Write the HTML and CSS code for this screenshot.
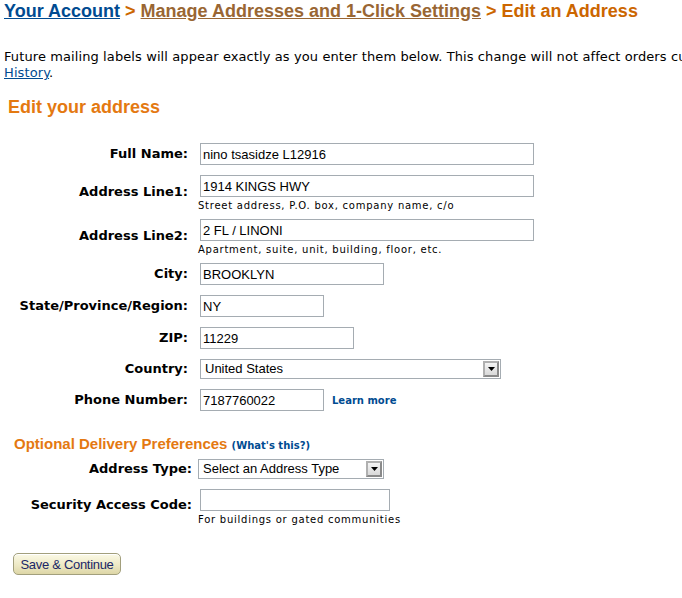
FILE: index.html
```html
<!DOCTYPE html>
<html lang="en">
<head>
<meta charset="utf-8">
<title>Edit an Address</title>
<link rel="stylesheet" href="styles.css">
</head>
<body>
<div class="page">
  <h1 class="crumbs"><a class="crumb-link" href="#">Your Account</a> <span class="sep">&gt;</span> <a class="crumb-visited" href="#">Manage Addresses and 1-Click Settings</a> <span class="sep">&gt;</span> <span class="current">Edit an Address</span></h1>

  <p class="intro">Future mailing labels will appear exactly as you enter them below. This change will not affect orders currently in your Order<br><a href="#">History</a>.</p>

  <h2 class="section-title">Edit your address</h2>

  <div class="form-grid main-grid">
    <label class="lbl">Full Name:</label>
    <div class="field"><input class="txt w-long" type="text" value="nino tsasidze L12916"></div>

    <label class="lbl">Address Line1:</label>
    <div class="field with-hint"><input class="txt w-long" type="text" value="1914 KINGS HWY"><div class="hint">Street address, P.O. box, company name, c/o</div></div>

    <label class="lbl">Address Line2:</label>
    <div class="field with-hint"><input class="txt w-long" type="text" value="2 FL / LINONI"><div class="hint">Apartment, suite, unit, building, floor, etc.</div></div>

    <label class="lbl">City:</label>
    <div class="field"><input class="txt w-city" type="text" value="BROOKLYN"></div>

    <label class="lbl">State/Province/Region:</label>
    <div class="field"><input class="txt w-short" type="text" value="NY"></div>

    <label class="lbl">ZIP:</label>
    <div class="field"><input class="txt w-zip" type="text" value="11229"></div>

    <label class="lbl">Country:</label>
    <div class="field"><div class="select w-country"><span class="select-text">United States</span><span class="select-btn"><svg width="7" height="4" viewBox="0 0 7 4"><path d="M0 0h7L3.5 4z" fill="#000"/></svg></span></div></div>

    <label class="lbl">Phone Number:</label>
    <div class="field"><input class="txt w-short" type="text" value="7187760022"><a class="small-link learn" href="#">Learn more</a></div>
  </div>

  <h3 class="opt-title">Optional Delivery Preferences <a class="small-link" href="#">(What's this?)</a></h3>

  <div class="form-grid opt-grid">
    <label class="lbl">Address Type:</label>
    <div class="field"><div class="select w-type"><span class="select-text">Select an Address Type</span><span class="select-btn"><svg width="7" height="4" viewBox="0 0 7 4"><path d="M0 0h7L3.5 4z" fill="#000"/></svg></span></div></div>

    <label class="lbl">Security Access Code:</label>
    <div class="field with-hint last"><input class="txt w-code" type="text" value=""><div class="hint">For buildings or gated communities</div></div>
  </div>

  <div class="actions">
    <button class="save-btn" type="button">Save &amp; Continue</button>
  </div>
</div>
</body>
</html>
```

FILE: styles.css
```css
html, body {
  margin: 0;
  padding: 0;
  background: #ffffff;
  overflow: hidden;
}

body {
  font-family: "DejaVu Sans", Verdana, sans-serif;
  font-size: 12px;
  color: #000000;
}

.page {
  width: 900px;
}

.crumbs {
  margin: 0;
  padding: 0 0 0 4px;
  font-family: "Liberation Sans", Arial, sans-serif;
  font-weight: bold;
  font-size: 18px;
  line-height: 22px;
  white-space: nowrap;
}

.crumb-link {
  color: #004b91;
  text-decoration: underline;
}

.crumb-visited {
  color: #996633;
  text-decoration: underline;
}

.sep,
.current {
  color: #cc6600;
}

.intro {
  margin: 27px 0 0 0;
  padding-left: 4px;
  font-size: 13px;
  line-height: 16px;
  letter-spacing: 0.1px;
}

.intro a {
  color: #004b91;
}

.section-title {
  margin: 16px 0 0 0;
  padding-left: 8px;
  font-family: "Liberation Sans", Arial, sans-serif;
  font-weight: bold;
  font-size: 18px;
  line-height: 20px;
  color: #e47911;
}

.form-grid {
  display: grid;
  align-items: center;
}

.main-grid {
  margin-top: 21px;
  grid-template-columns: 188px auto;
  column-gap: 10px;
}

.opt-grid {
  margin-top: 0;
  grid-template-columns: 192px auto;
  column-gap: 6px;
}

.lbl {
  text-align: right;
  font-weight: bold;
  font-size: 13px;
  line-height: 16px;
  white-space: nowrap;
}

.field {
  padding: 5px 0;
  display: flex;
  flex-direction: row;
  align-items: center;
  flex-wrap: wrap;
}

.field.with-hint {
  flex-direction: column;
  align-items: flex-start;
  padding-bottom: 2px;
}

.field.last {
  padding-bottom: 0;
}

.txt {
  box-sizing: border-box;
  height: 22px;
  margin: 0 0 0 2px;
  padding: 0 2px;
  border: 1px solid #a5acb2;
  font-family: "Liberation Sans", Arial, sans-serif;
  font-size: 13px;
  color: #000000;
  background: #ffffff;
  outline: none;
}

.w-long { width: 334px; }
.w-city { width: 184px; }
.w-short { width: 124px; }
.w-zip { width: 154px; }
.w-code { width: 190px; }

.main-grid .select {
  margin-left: 2px;
}

.select {
  box-sizing: border-box;
  height: 20px;
  border: 1px solid #a5acb2;
  background: #ffffff;
  display: flex;
  align-items: center;
  justify-content: space-between;
  font-family: "Liberation Sans", Arial, sans-serif;
  font-size: 13px;
}

.w-country { width: 301px; }
.w-type { width: 186px; }

.select-text {
  padding-left: 4px;
  line-height: 18px;
}

.select-btn {
  box-sizing: border-box;
  width: 16px;
  height: 16px;
  margin-right: 1px;
  border: 2px solid #8a8a8a;
  border-top-color: #b0b0b0;
  border-left-color: #b0b0b0;
  background: linear-gradient(#f4f4f4, #d9d9d9);
  display: flex;
  align-items: center;
  justify-content: center;
}

.select-btn svg {
  display: block;
}

.hint {
  margin-top: 3px;
  font-size: 10px;
  line-height: 12px;
  letter-spacing: 0.75px;
  white-space: nowrap;
}

.small-link {
  color: #004b91;
  font-family: "DejaVu Sans", Verdana, sans-serif;
  font-weight: bold;
  font-size: 10px;
  letter-spacing: 0;
  text-decoration: none;
}

.learn {
  margin-left: 8px;
}

.opt-title {
  margin: 20px 0 0 0;
  padding-left: 14px;
  font-family: "Liberation Sans", Arial, sans-serif;
  font-weight: bold;
  font-size: 15px;
  line-height: 16px;
  color: #e47911;
}

.actions {
  margin-top: 27px;
  padding-left: 13px;
}

.save-btn {
  box-sizing: border-box;
  width: 108px;
  height: 22px;
  margin: 0;
  padding: 0;
  border: 1px solid #a29f7c;
  border-radius: 5px;
  background: linear-gradient(#fbf9e6, #ece7c2 60%, #ddd6a6);
  box-shadow: inset 0 1px 0 #ffffff;
  font-family: "Liberation Sans", Arial, sans-serif;
  font-size: 13px;
  letter-spacing: -0.3px;
  color: #1a2666;
  cursor: pointer;
}
```
